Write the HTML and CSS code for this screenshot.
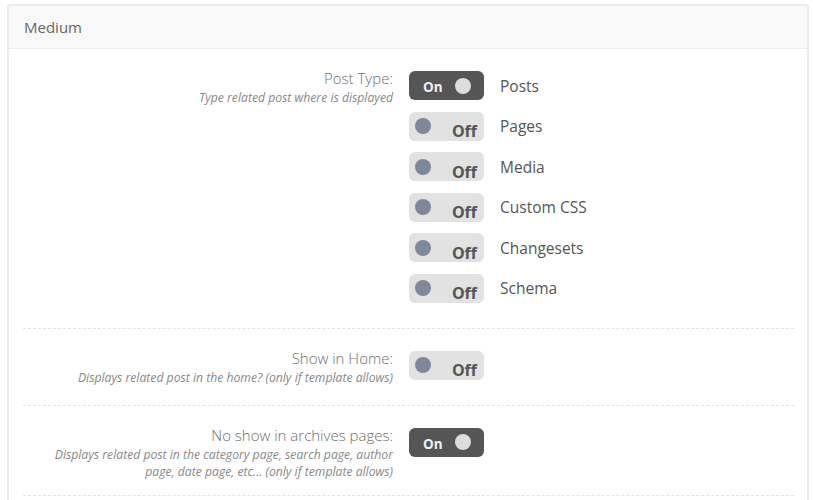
FILE: index.html
```html
<!DOCTYPE html>
<html>
<head>
<meta charset="utf-8">
<link rel="stylesheet" href="styles.css">
</head>
<body>
<div class="panel">
  <div class="panel-head">Medium</div>
  <div class="panel-body">
    <div class="row">
      <div class="label">
        <div class="title">Post Type:</div>
        <div class="desc">Type related post where is displayed</div>
      </div>
      <div class="options">
        <div class="opt"><span class="toggle on"><span class="txt">On</span><span class="knob"></span></span><span class="name">Posts</span></div>
        <div class="opt"><span class="toggle off"><span class="knob"></span><span class="txt">Off</span></span><span class="name">Pages</span></div>
        <div class="opt"><span class="toggle off"><span class="knob"></span><span class="txt">Off</span></span><span class="name">Media</span></div>
        <div class="opt"><span class="toggle off"><span class="knob"></span><span class="txt">Off</span></span><span class="name">Custom CSS</span></div>
        <div class="opt"><span class="toggle off"><span class="knob"></span><span class="txt">Off</span></span><span class="name">Changesets</span></div>
        <div class="opt"><span class="toggle off"><span class="knob"></span><span class="txt">Off</span></span><span class="name">Schema</span></div>
      </div>
    </div>
    <div class="row">
      <div class="label">
        <div class="title">Show in Home:</div>
        <div class="desc">Displays related post in the home? (only if template allows)</div>
      </div>
      <div class="options">
        <div class="opt"><span class="toggle off"><span class="knob"></span><span class="txt">Off</span></span></div>
      </div>
    </div>
    <div class="row">
      <div class="label">
        <div class="title">No show in archives pages:</div>
        <div class="desc">Displays related post in the category page, search page, author<br>page, date page, etc... (only if template allows)</div>
      </div>
      <div class="options">
        <div class="opt"><span class="toggle on"><span class="txt">On</span><span class="knob"></span></span></div>
      </div>
    </div>
    <div class="row"></div>
  </div>
</div>
</body>
</html>
```
FILE: styles.css
```css
html, body {
  margin: 0;
  padding: 0;
  background: #ffffff;
}
body {
  font-family: "Open Sans", "Noto Sans", sans-serif;
  color: #555;
}
.panel {
  margin: 4px 0 0 7px;
  width: 798px;
  border: 2px solid #ececec;
  border-radius: 3px;
  height: 600px;
  background: #fff;
}
.panel-head {
  height: 42px;
  line-height: 42px;
  padding-left: 15px;
  background: #f9f9f9;
  border-bottom: 1px solid #eeeeee;
  font-size: 15px;
  color: #666;
}
.panel-body {
  padding: 0 13px 0 14px;
}
.row {
  display: flex;
  gap: 16px;
  padding: 22px 0 15px;
  border-bottom: 1px dashed #e4e4e4;
}
.label {
  width: 370px;
  text-align: right;
  margin-top: -3px;
}
.title {
  font-size: 15px;
  font-weight: 300;
  line-height: 20px;
  color: #6e6e6e;
}
.desc {
  font-size: 12.2px;
  font-style: italic;
  line-height: 17px;
  margin-top: 1px;
  color: #888;
  white-space: nowrap;
}
.options {
  display: flex;
  flex-direction: column;
  gap: 11.6px;
  padding-bottom: 10px;
}
.opt {
  display: flex;
  align-items: center;
  gap: 16px;
}
.toggle {
  width: 75px;
  height: 29px;
  border-radius: 6px;
  display: flex;
  align-items: center;
  box-sizing: border-box;
}
.toggle.on {
  background: #555555;
  padding: 0 13px 0 14px;
  justify-content: space-between;
}
.toggle.off {
  background: #e2e2e2;
  padding: 0 7px 0 6px;
  justify-content: space-between;
}
.toggle .knob {
  width: 16px;
  height: 16px;
  border-radius: 50%;
}
.toggle.on .knob {
  background: #dcdedc;
}
.toggle.off .knob {
  background: #7e8898;
}
.toggle .txt {
  font-weight: 700;
}
.toggle.on .txt {
  font-size: 13.5px;
  color: #f0f0f0;
  padding-top: 3px;
}
.toggle.off .txt {
  font-size: 16px;
  color: #555;
  padding-top: 10px;
  line-height: 18px;
}
.name {
  font-size: 15.5px;
  color: #555;
}
.row:last-child {
  border-bottom: none;
}
```
